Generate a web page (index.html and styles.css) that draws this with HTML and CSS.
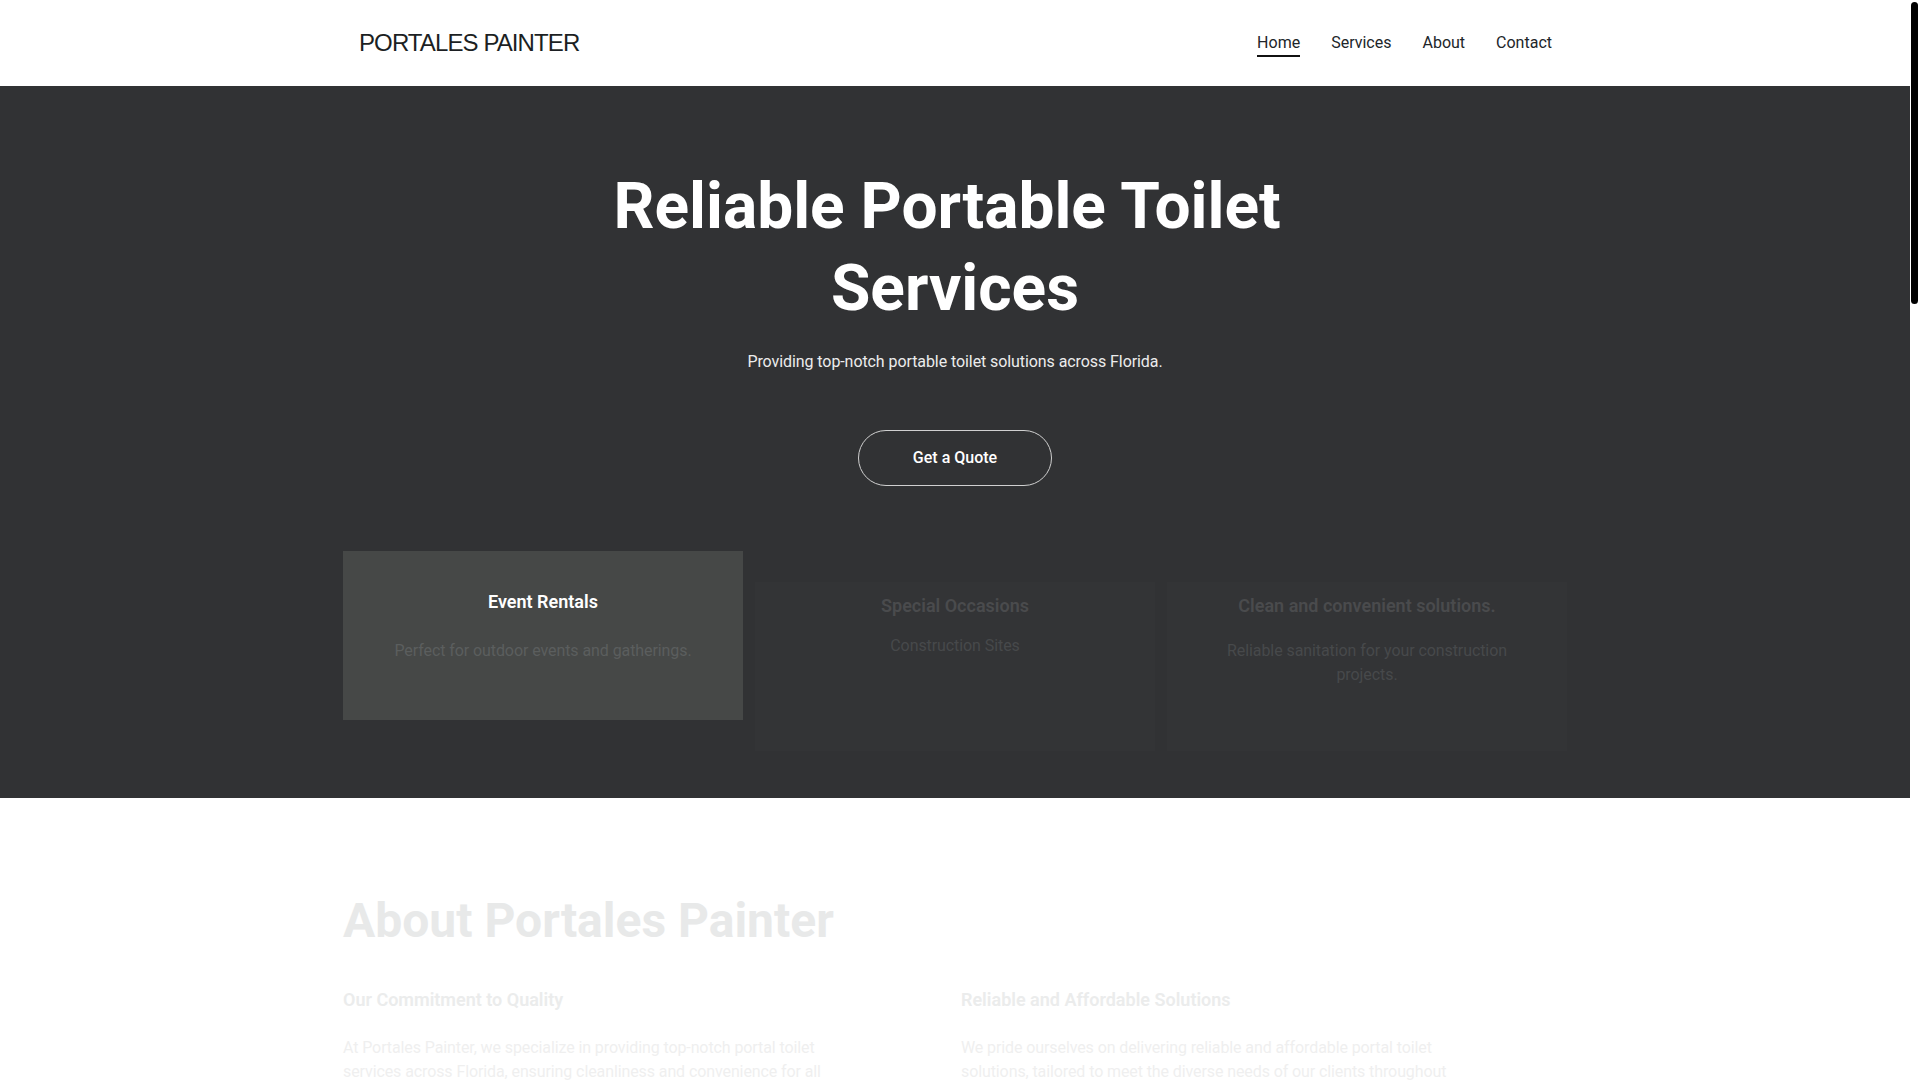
FILE: index.html
```html
<!DOCTYPE html>
<html lang="en">
<head>
<meta charset="utf-8">
<title>Portales Painter - Reliable Portable Toilet Services</title>
<link rel="stylesheet" href="styles.css">
</head>
<body>
<div class="scroll-thumb" aria-hidden="true"></div>
<header class="site-header">
  <div class="container header-inner">
    <a class="logo" href="#home">PORTALES PAINTER</a>
    <nav class="main-nav">
      <a class="nav-link active" href="#home">Home</a>
      <a class="nav-link" href="#services">Services</a>
      <a class="nav-link" href="#about">About</a>
      <a class="nav-link" href="#contact">Contact</a>
    </nav>
  </div>
</header>

<section class="hero" id="home">
  <div class="container hero-inner">
    <h1 class="hero-title">Reliable Portable Toilet&nbsp;<wbr>Services</h1>
    <p class="hero-subtitle">Providing top-notch portable toilet solutions across Florida.</p>
    <a class="btn-quote" href="#contact">Get a Quote</a>
    <div class="feature-grid">
      <div class="feature-card">
        <h3 class="feature-title">Event Rentals</h3>
        <p class="feature-text">Perfect for outdoor events and gatherings.</p>
      </div>
      <div class="feature-card feature-card--entering feature-card--tight">
        <h3 class="feature-title">Special Occasions</h3>
        <p class="feature-text">Construction Sites</p>
      </div>
      <div class="feature-card feature-card--entering">
        <h3 class="feature-title">Clean and convenient solutions.</h3>
        <p class="feature-text">Reliable sanitation for your construction projects.</p>
      </div>
    </div>
  </div>
</section>

<section class="about" id="about">
  <div class="container">
    <h2 class="about-title">About Portales Painter</h2>
    <div class="about-grid">
      <div class="about-col">
        <h3>Our Commitment to Quality</h3>
        <p>At Portales Painter, we specialize in providing top-notch portal toilet services across Florida, ensuring cleanliness and convenience for all your events and projects.</p>
      </div>
      <div class="about-col">
        <h3>Reliable and Affordable Solutions</h3>
        <p>We pride ourselves on delivering reliable and affordable portal toilet solutions, tailored to meet the diverse needs of our clients throughout Florida.</p>
      </div>
    </div>
  </div>
</section>

<section class="services" id="services">
  <div class="container">
    <h2 class="section-title">Our Services</h2>
    <div class="services-grid">
      <div class="service-item">
        <h3>Standard Units</h3>
        <p>Clean, well-maintained portable toilets for any occasion.</p>
      </div>
      <div class="service-item">
        <h3>Luxury Restroom Trailers</h3>
        <p>Upscale restroom solutions for weddings and special events.</p>
      </div>
      <div class="service-item">
        <h3>Handwashing Stations</h3>
        <p>Portable sinks to keep guests and workers clean.</p>
      </div>
    </div>
  </div>
</section>

<section class="contact" id="contact">
  <div class="container">
    <h2 class="section-title">Contact Us</h2>
    <p>Call us today or send a message to request a free quote for your next event or project.</p>
  </div>
</section>

<footer class="site-footer">
  <div class="container">
    <p>&copy; 2024 Portales Painter. All rights reserved.</p>
  </div>
</footer>
</body>
</html>
```

FILE: styles.css
```css
* {
  box-sizing: border-box;
}

html {
  background: #ffffff;
}

body {
  margin: 0 10px 0 0;
  font-family: Roboto, "Helvetica Neue", Arial, sans-serif;
  font-size: 16px;
  line-height: 1.5;
  color: #212529;
  background: #ffffff;
}

/* page scrollbar thumb, drawn over the right gutter */
.scroll-thumb {
  position: fixed;
  top: 2px;
  right: 2px;
  width: 7px;
  height: 302px;
  border-radius: 4px;
  background: #000000;
  z-index: 10;
}

.container {
  width: 1224px;
  margin: 0 auto;
}

/* Header */
.site-header {
  height: 86px;
  background: #ffffff;
}

.header-inner {
  height: 100%;
  display: flex;
  align-items: center;
  justify-content: space-between;
  padding: 0 15px 0 16px;
}

.logo {
  font-family: "Liberation Sans", Arial, sans-serif;
  font-size: 24px;
  letter-spacing: -0.9px;
  line-height: 1.2;
  color: #1c1f23;
  text-decoration: none;
}

.main-nav {
  display: flex;
  gap: 31px;
}

.nav-link {
  color: #212529;
  text-decoration: none;
  line-height: 24px;
  padding-top: 2px;
  border-bottom: 2px solid transparent;
}

.nav-link.active {
  border-bottom-color: #111111;
}

/* Hero */
.hero {
  background: #313234;
  padding: 80px 0 78px;
}

.hero-inner {
  display: flex;
  flex-direction: column;
  align-items: center;
  text-align: center;
}

.hero-title {
  margin: 0;
  max-width: 800px;
  font-size: 64px;
  font-weight: 700;
  line-height: 82px;
  color: #ffffff;
}

.hero-subtitle {
  margin: 20px 0 0;
  letter-spacing: -0.08px;
  color: #ececec;
}

.btn-quote {
  display: inline-block;
  margin-top: 56px;
  padding: 15px 54px;
  border: 1px solid #d0d0d0;
  border-radius: 30px;
  color: #ffffff;
  font-weight: 500;
  line-height: 24px;
  text-decoration: none;
}

.feature-grid {
  align-self: stretch;
  margin-top: 65px;
  display: grid;
  grid-template-columns: repeat(3, 1fr);
  gap: 12px;
  text-align: center;
}

.feature-card {
  height: 169px;
  padding: 40px 32px;
  background: #464847;
}

.feature-title {
  margin: 0 0 26px;
  font-size: 18px;
  font-weight: 600;
  line-height: 1.2;
  color: #ffffff;
}

.feature-text {
  margin: 0;
  letter-spacing: -0.08px;
  color: #5b5e5e;
}

.feature-card--entering {
  padding-top: 13px;
  background: #333436;
  transform: translateY(31px);
}

.feature-card--entering .feature-title {
  margin-bottom: 22px;
  color: #4a4b4d;
}

.feature-card--entering .feature-text {
  color: #47494b;
}

.feature-card--tight .feature-title {
  margin-bottom: 17px;
}

/* About */
.about {
  min-height: 700px;
  padding: 94px 0 0;
}

.about-title {
  margin: 0 0 39px;
  font-size: 48px;
  font-weight: 700;
  line-height: 1.2;
  color: #e8e9e9;
}

.about-grid {
  display: grid;
  grid-template-columns: 1fr 1fr;
  gap: 12px;
}

.about-col h3 {
  margin: 0 0 26px;
  font-size: 18px;
  font-weight: 600;
  line-height: 1.2;
  color: #ebecec;
}

.about-col p {
  margin: 0;
  max-width: 500px;
  letter-spacing: -0.1px;
  color: #efefef;
}

/* Lower sections */
.services {
  min-height: 900px;
  padding: 96px 0;
  background: #f7f7f7;
}

.section-title {
  margin: 0 0 40px;
  font-size: 48px;
  font-weight: 700;
  line-height: 1.2;
}

.services-grid {
  display: grid;
  grid-template-columns: repeat(3, 1fr);
  gap: 12px;
}

.service-item h3 {
  margin: 0 0 16px;
  font-size: 18px;
  font-weight: 600;
}

.service-item p {
  margin: 0;
}

.contact {
  min-height: 900px;
  padding: 96px 0;
}

.site-footer {
  min-height: 552px;
  padding: 48px 0;
  background: #313234;
  color: #ececec;
}

.site-footer p {
  margin: 0;
}
```
